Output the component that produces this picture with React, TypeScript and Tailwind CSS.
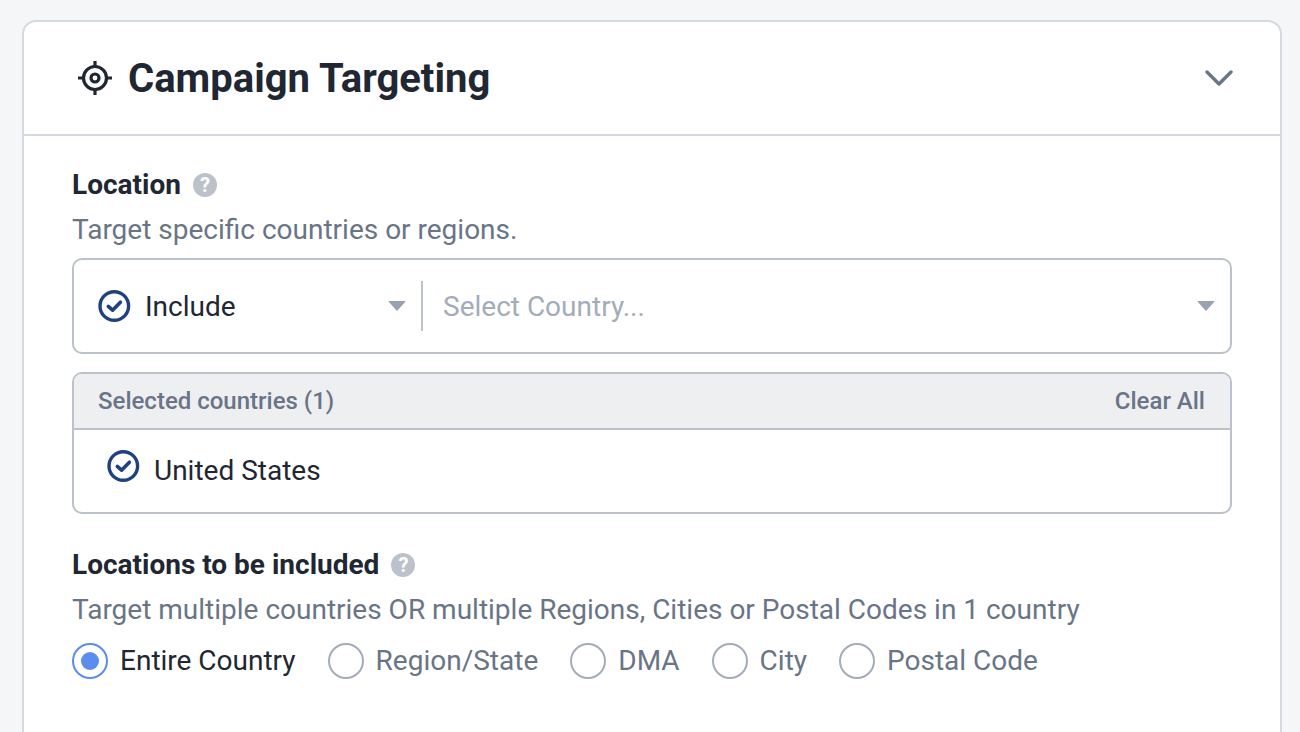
const font = { fontFamily: "Roboto, sans-serif" };

function CheckCircle() {
  return (
    <svg width="34" height="34" viewBox="0 0 34 34" fill="none" className="shrink-0">
      <circle cx="16.3" cy="17" r="14.3" stroke="#1f4082" strokeWidth="3.4" />
      <path d="M10.3 17.4 L14.6 21.2 L22.4 13.2" stroke="#1f4082" strokeWidth="3.6" strokeLinecap="round" strokeLinejoin="round" />
    </svg>
  );
}

function Help() {
  return (
    <span className="flex h-6 w-6 shrink-0 items-center justify-center rounded-full bg-[#bcc2cc] text-[20px] font-bold leading-none text-white">?</span>
  );
}

function Caret() {
  return (
    <svg width="18" height="12" viewBox="0 0 18 12" className="shrink-0">
      <path d="M1 1.5 H17 L9 10.5 Z" fill="#98a2b0" stroke="#98a2b0" strokeWidth="1" strokeLinejoin="round" />
    </svg>
  );
}

function Radio({ label, on }: { label: string; on?: boolean }) {
  return (
    <div className="flex items-center gap-3">
      <span className={`flex h-9 w-9 items-center justify-center rounded-full border-2 bg-white ${on ? "border-[#5a8dee]" : "border-[#a3adba]"}`}>
        {on && <span className="h-[18px] w-[18px] rounded-full bg-[#5a8dee]" />}
      </span>
      <span className={`text-[28px] leading-9 ${on ? "text-[#1f2733]" : "text-[#697586]"}`}>{label}</span>
    </div>
  );
}

export default function App() {
  return (
    <div style={font} className="h-[732px] w-[1300px] overflow-hidden bg-[#f5f6f8] pl-[22px] pr-[18px] pt-5">
      <div className="h-[760px] rounded-t-[14px] border-2 border-[#d6d9e1] bg-white">
        <div className="flex h-[114px] items-center justify-between border-b-2 border-[#d6d9e1] pl-[53px] pr-[47px]">
          <div className="flex items-center gap-[15px]">
            <svg width="36" height="36" viewBox="0 0 36 36" fill="none" stroke="#1f2733" strokeWidth="3.2">
              <circle cx="18" cy="18" r="11.5" />
              <circle cx="18" cy="18" r="4" />
              <path d="M18 1v6M18 29v6M1 18h6M29 18h6" />
            </svg>
            <h1 className="pt-0.5 text-[40px] font-bold leading-none text-[#1f2733]">Campaign Targeting</h1>
          </div>
          <svg width="28" height="18" viewBox="0 0 28 18" fill="none" stroke="#6a7788" strokeWidth="3.4" strokeLinecap="round" strokeLinejoin="round">
            <path d="M2 3 L14 15 L26 3" />
          </svg>
        </div>
        <div className="px-[48px] pt-[35px]">
          <div className="flex h-7 items-center gap-3">
            <span className="text-[28px] font-bold leading-none text-[#1f2733]">Location</span>
            <Help />
          </div>
          <p className="mt-[15px] text-[28px] leading-[32px] text-[#697586]">Target specific countries or regions.</p>
          <div className="mt-3 flex h-[96px] items-center rounded-[10px] border-2 border-[#bcc2cc] pl-6 pr-[15px]">
            <div className="flex w-[308px] items-center gap-[13px]">
              <CheckCircle />
              <span className="flex-1 pt-0.5 text-[28px] text-[#1f2733]">Include</span>
              <Caret />
            </div>
            <div className="ml-[15px] h-[50px] w-0.5 bg-[#bcc2cc]" />
            <span className="ml-5 flex-1 pt-0.5 text-[28px] text-[#a3adba]">Select Country...</span>
            <Caret />
          </div>
          <div className="mt-[18px] overflow-hidden rounded-[10px] border-2 border-[#bcc2cc]">
            <div className="flex h-[56px] items-center justify-between border-b-2 border-[#bcc2cc] bg-[#eeeff1] pl-6 pr-[25px] text-[24px] font-medium text-[#697586]">
              <span>Selected countries (1)</span>
              <span>Clear All</span>
            </div>
            <div className="flex h-[82px] items-start gap-[13px] pl-[33px] pt-[19px]">
              <CheckCircle />
              <span className="pt-[3px] text-[28px] leading-[38px] text-[#1f2733]">United States</span>
            </div>
          </div>
          <div className="mt-[37px] flex h-7 items-center gap-3">
            <span className="text-[28px] font-bold leading-none text-[#1f2733]">Locations to be included</span>
            <Help />
          </div>
          <p className="mt-[15px] text-[28px] leading-[32px] text-[#697586]">Target multiple countries OR multiple Regions, Cities or Postal Codes in 1 country</p>
          <div className="mt-[17px] flex gap-8">
            <Radio label="Entire Country" on />
            <Radio label="Region/State" />
            <Radio label="DMA" />
            <Radio label="City" />
            <Radio label="Postal Code" />
          </div>
        </div>
      </div>
    </div>
  );
}
